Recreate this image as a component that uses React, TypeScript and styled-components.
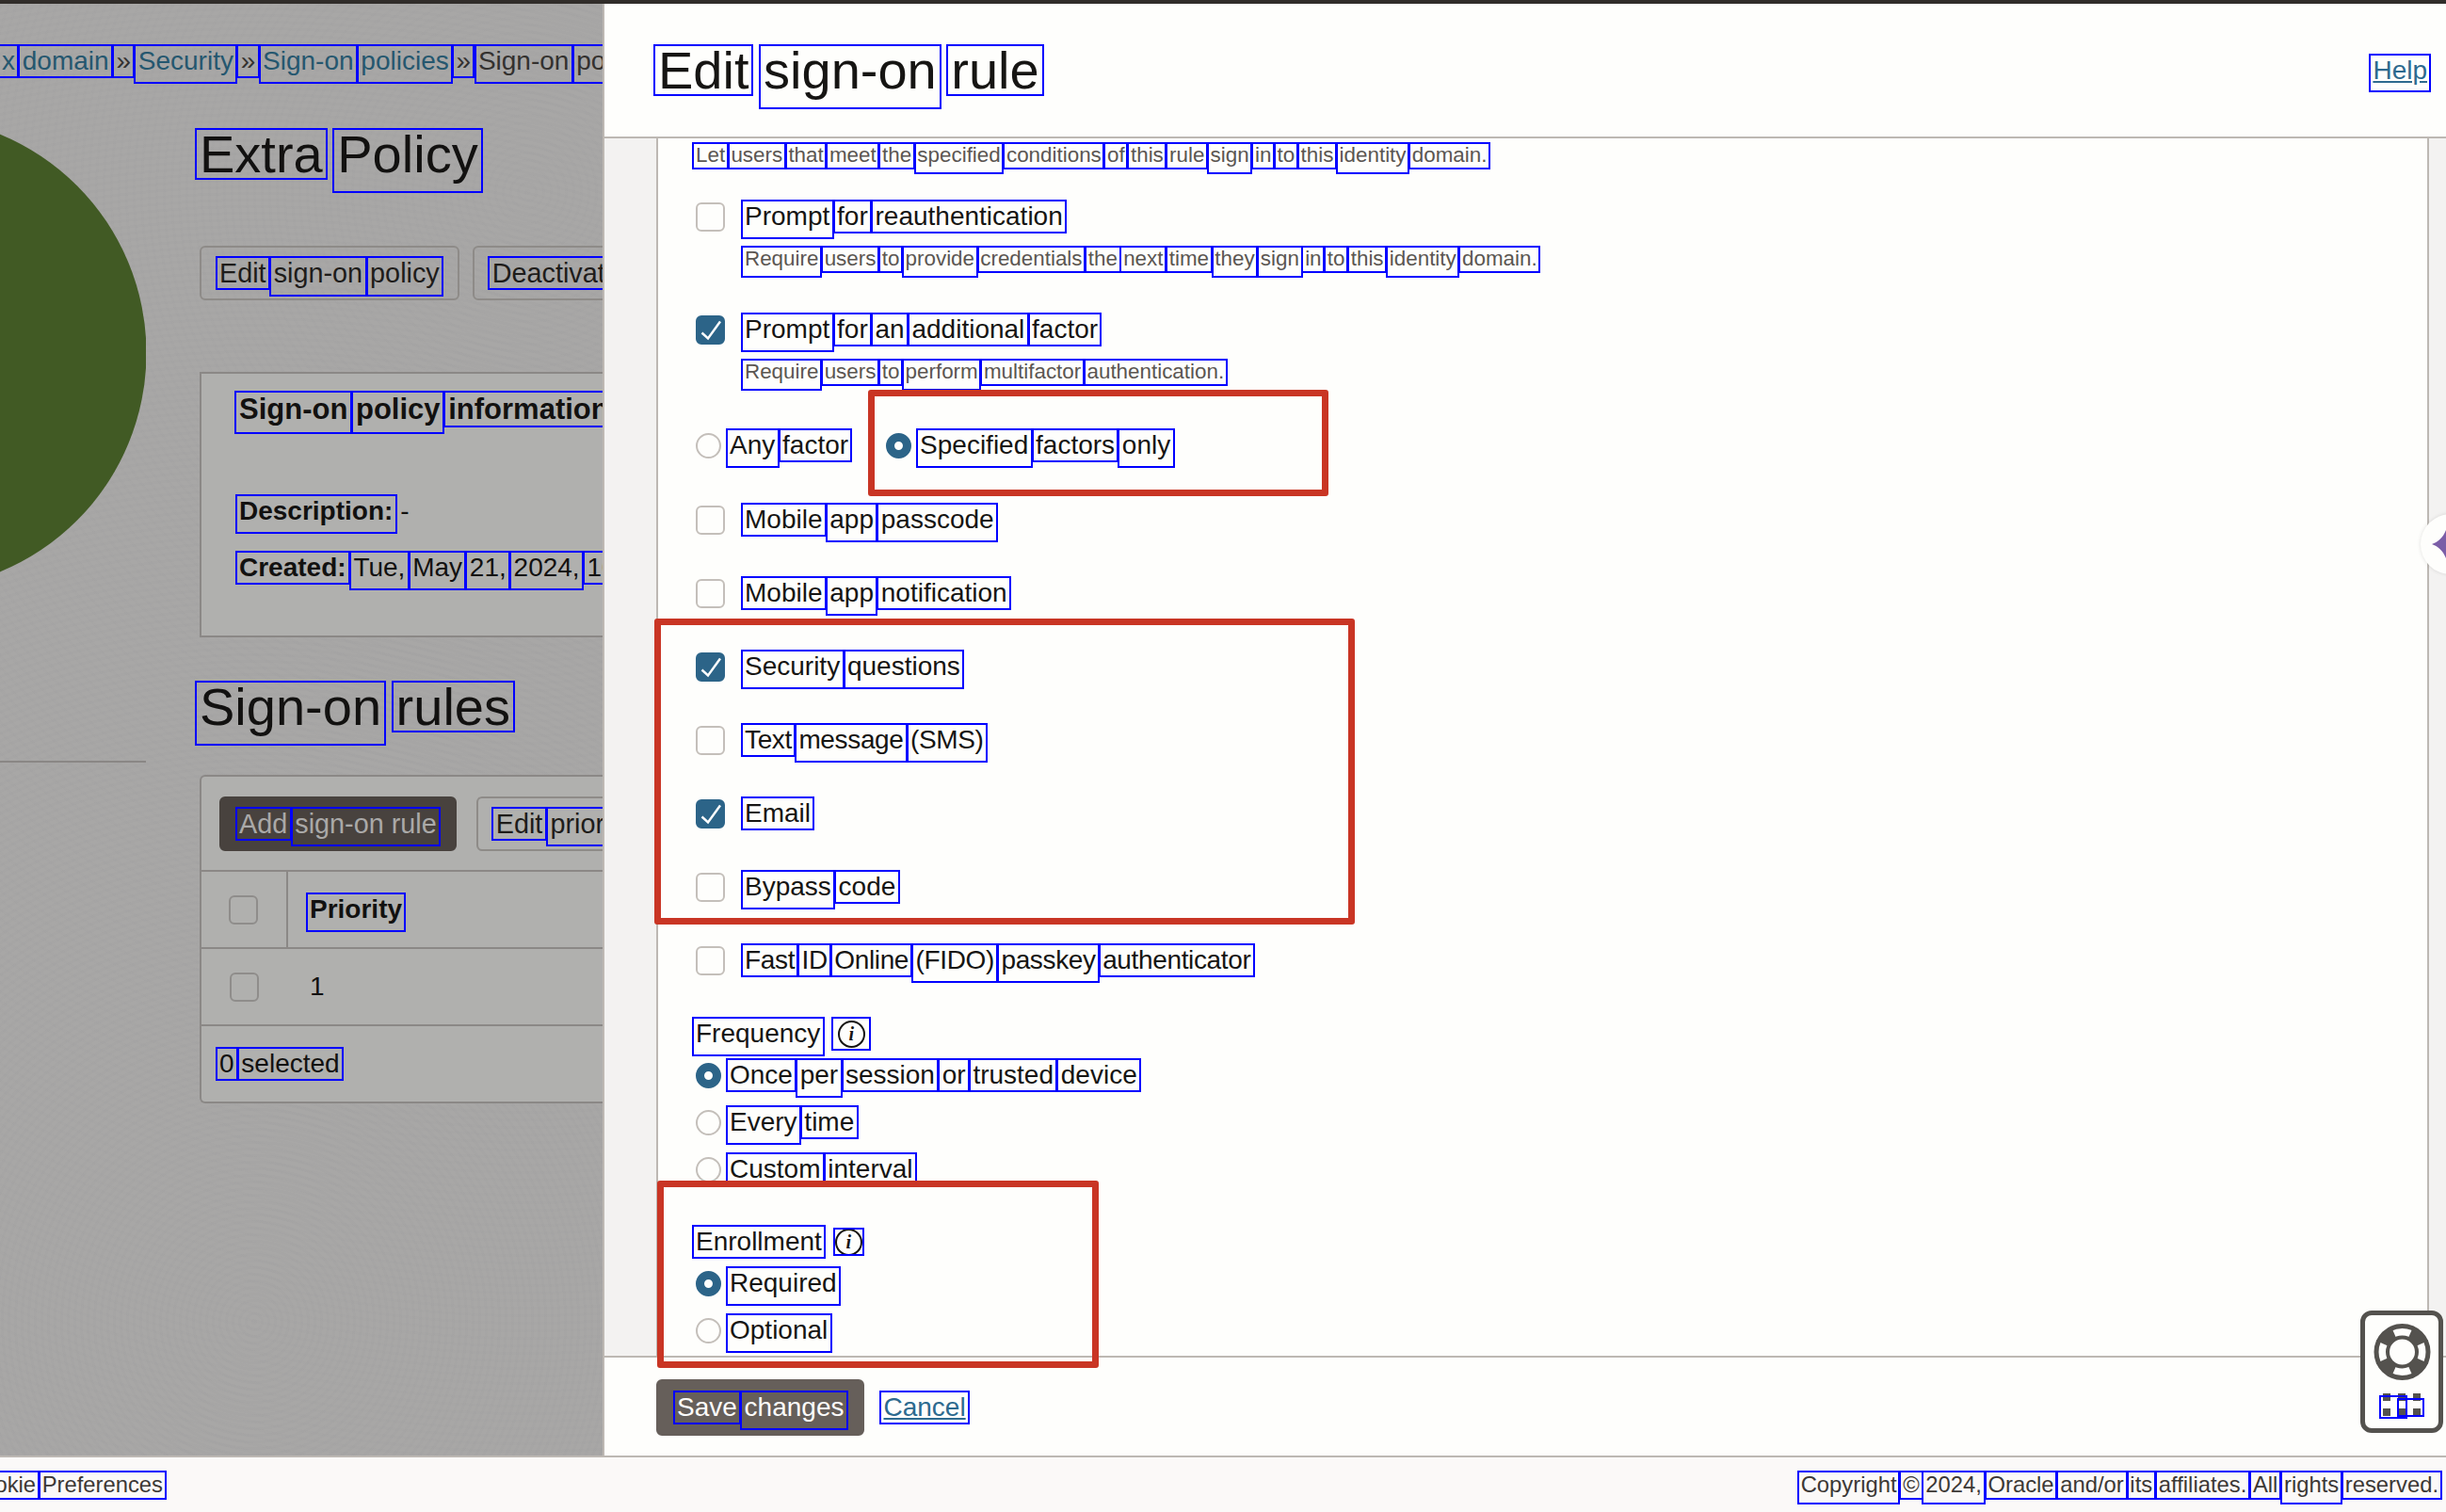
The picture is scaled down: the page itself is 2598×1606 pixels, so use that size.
import styled, { createGlobalStyle } from 'styled-components';

const GlobalStyle = createGlobalStyle`
  html, body {
    margin: 0;
    padding: 0;
    background: #fbf9f8;
  }
  body {
    font-family: "Liberation Sans", Arial, sans-serif;
    color: #161513;
  }
`;

const Page = styled.div`
  position: relative;
  width: 2598px;
  height: 1606px;
  overflow: hidden;
  display: flex;
  flex-direction: column;
  font-size: 28px;
  line-height: 34px;
`;

const TopBar = styled.div`
  height: 4px;
  flex: none;
  background: #312d2a;
`;

const Workspace = styled.div`
  display: flex;
  height: 1542px;
  flex: none;
`;

/* the OCR boxes that sit around every word in the reference */
const Word = styled.span<{ $desc?: boolean; $big?: boolean }>`
  display: inline-block;
  padding: 0 ${p => (p.$big ? '0.07em' : '0.12em')};
  margin: 0 ${p => (p.$big ? '-0.07em' : '-0.12em')} ${p => (p.$desc ? (p.$big ? '-0.25em' : '-0.22em') : '0')};
  line-height: ${p => (p.$big ? '0.95em' : '1.2em')};
  height: ${p => (p.$desc ? (p.$big ? '1.2em' : '1.42em') : p.$big ? '0.95em' : '1.2em')};
  outline: 2px solid #0000ff;
  outline-offset: -1px;
  white-space: nowrap;
`;

function Words({ text, big }: { text: string; big?: boolean }) {
  return (
    <>
      {text.split(' ').map((w, i) => (
        <span key={i}>
          {i > 0 && ' '}
          <Word $big={big} $desc={/[gjpqy(),]/.test(w)}>{w}</Word>
        </span>
      ))}
    </>
  );
}

/* ---- dimmed page behind the drawer ---- */

const Backdrop = styled.div`
  width: 640px;
  flex: none;
  overflow: hidden;
  background-color: #a8a7a6;
  background-image:
    repeating-radial-gradient(circle at 270px 1400px, rgba(140, 140, 145, 0.07) 0 3px, transparent 3px 7px),
    repeating-radial-gradient(circle at 560px 200px, rgba(140, 140, 145, 0.05) 0 3px, transparent 3px 8px);
  color: #121110;
`;

const Breadcrumb = styled.div`
  height: 34px;
  margin-top: 44px;
  margin-bottom: -1px;
  padding-left: 2px;
  white-space: nowrap;
  color: #33312f;
`;

const Crumb = styled.span`
  color: #25576f;
`;

const BackdropRow = styled.div`
  display: flex;
`;

const Sidebar = styled.div`
  width: 155px;
  height: 729px;
  flex: none;
  overflow: hidden;
  border-bottom: 2px solid #8a8785;
  box-sizing: border-box;
  svg {
    display: block;
  }
`;

const Main = styled.div`
  padding-left: 57px;
  padding-top: 56px;
  flex: none;
  width: 1000px;
`;

const PageTitle = styled.h1<{ $mt?: number }>`
  margin: ${p => p.$mt ?? 0}px 0 0;
  font-size: 56px;
  line-height: 53px;
  font-weight: 400;
  white-space: nowrap;
`;

const Actions = styled.div`
  display: flex;
  gap: 14px;
  margin-top: 71px;
`;

const Button = styled.div<{ $primary?: boolean }>`
  height: 58px;
  box-sizing: border-box;
  display: flex;
  align-items: center;
  padding: 0 19px;
  border: 2px solid ${p => (p.$primary ? '#48423e' : '#8e8b88')};
  border-radius: 6px;
  background: ${p => (p.$primary ? '#48423e' : 'transparent')};
  color: ${p => (p.$primary ? '#aaa9a8' : '#1e1c1a')};
  font-size: 28.8px;
  white-space: nowrap;
  flex: none;
  span {
    white-space: pre;
  }
`;

const InfoCard = styled.div`
  margin-top: 76px;
  height: 282px;
  box-sizing: border-box;
  background: #b0b0ae;
  border: 2px solid #8b8886;
  border-right: 0;
  padding: 19px 0 0 40px;
`;

const CardTitle = styled.h2`
  margin: 0;
  font-size: 31px;
  line-height: 38px;
  font-weight: 700;
  white-space: nowrap;
`;

const InfoLine = styled.div<{ $mt: number }>`
  margin-top: ${p => p.$mt}px;
  white-space: nowrap;
  b {
    font-weight: 700;
  }
`;

const RulesCard = styled.div`
  margin-top: 46px;
  box-sizing: border-box;
  height: 349px;
  background: #b0b0ae;
  border: 2px solid #8b8886;
  border-right: 0;
  border-radius: 6px 0 0 6px;
`;

const RulesToolbar = styled.div`
  height: 99px;
  display: flex;
  align-items: center;
  gap: 21px;
  padding-left: 19px;
`;

const RulesRow = styled.div`
  display: flex;
  height: 82px;
  box-sizing: border-box;
  border-top: 2px solid #8b8886;
`;

const SelectCell = styled.div<{ $divider?: boolean }>`
  width: 92px;
  flex: none;
  box-sizing: border-box;
  display: flex;
  align-items: center;
  justify-content: center;
  border-right: ${p => (p.$divider ? '2px solid #8b8886' : '0')};
  padding-right: 2px;
`;

const RulesCell = styled.div<{ $bold?: boolean }>`
  display: flex;
  align-items: center;
  padding-left: 23px;
  font-weight: ${p => (p.$bold ? 700 : 400)};
`;

const RulesFooter = styled.div`
  display: flex;
  align-items: center;
  height: 82px;
  box-sizing: border-box;
  padding-left: 19px;
  border-top: 2px solid #8b8886;
`;

/* ---- edit drawer ---- */

const Drawer = styled.div`
  flex: 1;
  display: flex;
  flex-direction: column;
  box-sizing: border-box;
  border-left: 2px solid #bdb8b3;
  background: #fefefc;
`;

const DrawerHeader = styled.div`
  height: 143px;
  flex: none;
  box-sizing: border-box;
  border-bottom: 2px solid #bdb8b3;
  display: flex;
  align-items: center;
  justify-content: space-between;
  padding: 0 20px 0 57px;
`;

const TextLink = styled.span`
  color: #2d6a8f;
  white-space: nowrap;
  ${Word} {
    text-decoration: underline;
  }
`;

const DrawerBody = styled.div`
  height: 1295px;
  flex: none;
  box-sizing: border-box;
  border-bottom: 2px solid #bdb8b3;
  display: flex;
`;

const Gutter = styled.div<{ $side: 'left' | 'right' }>`
  flex: none;
  box-sizing: border-box;
  width: ${p => (p.$side === 'left' ? '57px' : '20px')};
  background: #f3f2f1;
  border-${p => (p.$side === 'left' ? 'right' : 'left')}: 2px solid #bdb8b3;
`;

const Form = styled.div`
  flex: 1;
  display: flex;
  flex-direction: column;
  padding-left: 40px;
  overflow: hidden;
`;

const Hint = styled.div<{ $mt: number; $indent?: boolean }>`
  margin-top: ${p => p.$mt}px;
  margin-left: ${p => (p.$indent ? '52px' : '0')};
  font-size: 22.4px;
  line-height: 30px;
  height: 30px;
  color: #5b5652;
  white-space: nowrap;
`;

const OptionRow = styled.div<{ $mt: number }>`
  margin-top: ${p => p.$mt}px;
  height: 36px;
  flex: none;
  display: flex;
  align-items: center;
  white-space: nowrap;
`;

const CheckLabel = styled.span<{ $tight?: boolean }>`
  margin-left: 21px;
  letter-spacing: ${p => (p.$tight ? '-0.35px' : 'normal')};
`;

const RadioLabel = styled.span`
  margin-left: 9px;
  margin-right: 40px;
`;

const FieldLabel = styled.span`
  margin-right: 13px;
`;

const CheckBox = styled.span<{ $checked?: boolean; $dim?: boolean }>`
  width: 31px;
  height: 31px;
  flex: none;
  box-sizing: border-box;
  border-radius: 6px;
  border: 2px solid ${p => (p.$dim ? '#8f8d8b' : p.$checked ? '#2c6488' : '#c4bfba')};
  background: ${p => (p.$dim ? 'transparent' : p.$checked ? '#2c6488' : '#fefefc')};
  display: flex;
`;

const RadioDot = styled.span<{ $checked?: boolean }>`
  width: 27px;
  height: 27px;
  flex: none;
  box-sizing: border-box;
  border-radius: 50%;
  border: ${p => (p.$checked ? '9px solid #2c6488' : '2px solid #c4bfba')};
  background: #fefefc;
`;

const InfoBadge = styled.span<{ $tight?: boolean }>`
  display: flex;
  align-items: center;
  justify-content: center;
  width: ${p => (p.$tight ? '31px' : '40px')};
  height: ${p => (p.$tight ? '28px' : '34px')};
  outline: 2px solid #0000ff;
  outline-offset: -1px;
`;

const InfoCircle = styled.span`
  width: 29px;
  height: 29px;
  flex: none;
  box-sizing: border-box;
  border: 2px solid #161513;
  border-radius: 50%;
  display: flex;
  align-items: center;
  justify-content: center;
  font-family: "Liberation Serif", serif;
  font-style: italic;
  font-weight: 700;
  font-size: 20px;
  line-height: 1;
`;

const DrawerFooter = styled.div`
  flex: 1;
  display: flex;
  align-items: center;
  gap: 20px;
  padding-left: 55px;
  padding-top: 2px;
`;

const SaveButton = styled(Button)`
  height: 60px;
  padding: 0 20px;
  background: #665f5a;
  border-color: #665f5a;
  color: #fcfbfa;
  font-size: 28px;
`;

/* ---- page footer ---- */

const Footer = styled.div`
  height: 60px;
  flex: none;
  box-sizing: border-box;
  border-top: 2px solid #bdb8b3;
  background: #fbf9f8;
  display: flex;
  align-items: center;
  justify-content: space-between;
  font-size: 23.8px;
  color: #3c3835;
  white-space: nowrap;
  padding-right: 8px;
`;

const CookieLink = styled.span`
  margin-left: -36px;
`;

/* ---- things lying over the page ---- */

const Callout = styled.div<{ $x: number; $y: number; $w: number; $h: number }>`
  position: absolute;
  left: ${p => p.$x}px;
  top: ${p => p.$y}px;
  width: ${p => p.$w}px;
  height: ${p => p.$h}px;
  box-sizing: border-box;
  border: 7px solid #c93524;
  border-radius: 3px;
  pointer-events: none;
`;

const AssistBubble = styled.div`
  position: absolute;
  left: 2571px;
  top: 546px;
  width: 64px;
  height: 64px;
  border-radius: 50%;
  background: #fefefc;
  box-shadow: 0 0 4px rgba(0, 0, 0, 0.12);
  svg {
    display: block;
  }
`;

const HelpWidget = styled.div`
  position: absolute;
  left: 2507px;
  top: 1392px;
  width: 88px;
  height: 130px;
  box-sizing: border-box;
  border: 5px solid #54524e;
  border-radius: 12px;
  background: #fefefc;
  svg {
    display: block;
  }
`;

function Check({ checked, dim }: { checked?: boolean; dim?: boolean }) {
  return (
    <CheckBox $checked={checked} $dim={dim}>
      {checked && (
        <svg width="27" height="27" viewBox="0 0 27 27" fill="none">
          <path d="M4.5 16.5 L11 22.5 L24 4.5" stroke="#fff" strokeWidth="2.4" />
        </svg>
      )}
    </CheckBox>
  );
}

function CheckOption({ label, mt, checked, tight }: { label: string; mt: number; checked?: boolean; tight?: boolean }) {
  return (
    <OptionRow $mt={mt}>
      <Check checked={checked} />
      <CheckLabel $tight={tight}><Words text={label} /></CheckLabel>
    </OptionRow>
  );
}

function Radio({ label, checked }: { label: string; checked?: boolean }) {
  return (
    <>
      <RadioDot $checked={checked} />
      <RadioLabel><Words text={label} /></RadioLabel>
    </>
  );
}

function RadioOption({ label, mt, checked }: { label: string; mt: number; checked?: boolean }) {
  return (
    <OptionRow $mt={mt}>
      <Radio label={label} checked={checked} />
    </OptionRow>
  );
}

function LifeRing() {
  const wedges = [45, 135, 225, 315];
  return (
    <svg width="78" height="120" viewBox="0 0 78 120" fill="none">
      <g transform="translate(39.5 39)">
        <circle r="27.5" stroke="#54524e" strokeWidth="5" fill="#fefefc" />
        <circle r="15.5" stroke="#54524e" strokeWidth="4" fill="#fefefc" />
        {wedges.map(a => (
          <path key={a} d="M15 -6 L28 -11 L28 11 L15 6 Z" fill="#54524e" transform={`rotate(${a})`} />
        ))}
      </g>
      {[19, 35, 51].map(x => [83, 99].map(y => (
        <rect key={`${x}-${y}`} x={x} y={y} width="8" height="8" fill="#54524e" />
      )))}
      <rect x="16" y="86" width="28" height="23" stroke="#0000ff" strokeWidth="2" />
      <rect x="35" y="89" width="27" height="18" stroke="#0000ff" strokeWidth="2" />
    </svg>
  );
}

export default function App() {
  return (
    <Page>
      <GlobalStyle />
      <TopBar />
      <Workspace>
        <Backdrop>
          <Breadcrumb>
            <Crumb><Words text="x domain" /></Crumb>{' '}
            <Words text="»" />{' '}
            <Crumb><Words text="Security" /></Crumb>{' '}
            <Words text="»" />{' '}
            <Crumb><Words text="Sign-on policies" /></Crumb>{' '}
            <Words text="»" />{' '}
            <Words text="Sign-on policy" />
          </Breadcrumb>
          <BackdropRow>
            <Sidebar>
              <svg width="155" height="727">
                <circle cx="-96" cy="294" r="251.5" fill="#415a24" />
              </svg>
            </Sidebar>
            <Main>
              <PageTitle><Words big text="Extra Policy" /></PageTitle>
              <Actions>
                <Button><span><Words text="Edit sign-on policy" /></span></Button>
                <Button><span><Words text="Deactivate sign-on policy" /></span></Button>
              </Actions>
              <InfoCard>
                <CardTitle><Words text="Sign-on policy information" /></CardTitle>
                <InfoLine $mt={72}><b><Words text="Description:" /></b> -</InfoLine>
                <InfoLine $mt={26}><b><Words text="Created:" /></b> <Words text="Tue, May 21, 2024, 10" /></InfoLine>
              </InfoCard>
              <PageTitle $mt={47}><Words big text="Sign-on rules" /></PageTitle>
              <RulesCard>
                <RulesToolbar>
                  <Button $primary><span><Word>Add</Word> <Word $desc>sign-on rule</Word></span></Button>
                  <Button><span><Words text="Edit priority" /></span></Button>
                </RulesToolbar>
                <RulesRow>
                  <SelectCell $divider><Check dim /></SelectCell>
                  <RulesCell $bold><Words text="Priority" /></RulesCell>
                </RulesRow>
                <RulesRow>
                  <SelectCell><Check dim /></SelectCell>
                  <RulesCell>1</RulesCell>
                </RulesRow>
                <RulesFooter><span><Words text="0 selected" /></span></RulesFooter>
              </RulesCard>
            </Main>
          </BackdropRow>
        </Backdrop>

        <Drawer>
          <DrawerHeader>
            <PageTitle><Words big text="Edit sign-on rule" /></PageTitle>
            <TextLink><Words text="Help" /></TextLink>
          </DrawerHeader>
          <DrawerBody>
            <Gutter $side="left" />
            <Form>
              <Hint $mt={3}><Words text="Let users that meet the specified conditions of this rule sign in to this identity domain." /></Hint>
              <CheckOption mt={32} label="Prompt for reauthentication" />
              <Hint $mt={12} $indent><Words text="Require users to provide credentials the next time they sign in to this identity domain." /></Hint>
              <CheckOption mt={42} checked label="Prompt for an additional factor" />
              <Hint $mt={12} $indent><Words text="Require users to perform multifactor authentication." /></Hint>
              <OptionRow $mt={45}>
                <Radio label="Any factor" />
                <Radio checked label="Specified factors only" />
              </OptionRow>
              <CheckOption mt={43} label="Mobile app passcode" />
              <CheckOption mt={42} label="Mobile app notification" />
              <CheckOption mt={42} checked label="Security questions" />
              <CheckOption mt={42} tight label="Text message (SMS)" />
              <CheckOption mt={42} checked label="Email" />
              <CheckOption mt={42} label="Bypass code" />
              <CheckOption mt={42} tight label="Fast ID Online (FIDO) passkey authenticator" />
              <OptionRow $mt={42}>
                <FieldLabel><Words text="Frequency" /></FieldLabel>
                <InfoBadge><InfoCircle>i</InfoCircle></InfoBadge>
              </OptionRow>
              <RadioOption mt={8} checked label="Once per session or trusted device" />
              <RadioOption mt={14} label="Every time" />
              <RadioOption mt={14} label="Custom interval" />
              <OptionRow $mt={41}>
                <FieldLabel><Words text="Enrollment" /></FieldLabel>
                <InfoBadge $tight><InfoCircle>i</InfoCircle></InfoBadge>
              </OptionRow>
              <RadioOption mt={8} checked label="Required" />
              <RadioOption mt={14} label="Optional" />
            </Form>
            <Gutter $side="right" />
          </DrawerBody>
          <DrawerFooter>
            <SaveButton><span><Words text="Save changes" /></span></SaveButton>
            <TextLink><Words text="Cancel" /></TextLink>
          </DrawerFooter>
        </Drawer>
      </Workspace>

      <Footer>
        <CookieLink><Words text="Cookie Preferences" /></CookieLink>
        <span><Words text="Copyright © 2024, Oracle and/or its affiliates. All rights reserved." /></span>
      </Footer>

      <Callout $x={922} $y={414} $w={489} $h={113} />
      <Callout $x={695} $y={657} $w={744} $h={325} />
      <Callout $x={698} $y={1254} $w={469} $h={199} />

      <AssistBubble>
        <svg width="64" height="64" viewBox="0 0 64 64">
          <path d="M12 32 C18 30 24 25 27 17 L38 4 L64 32 L38 60 L27 47 C24 39 18 34 12 32 Z" fill="#7b5ea7" />
        </svg>
      </AssistBubble>

      <HelpWidget><LifeRing /></HelpWidget>
    </Page>
  );
}
